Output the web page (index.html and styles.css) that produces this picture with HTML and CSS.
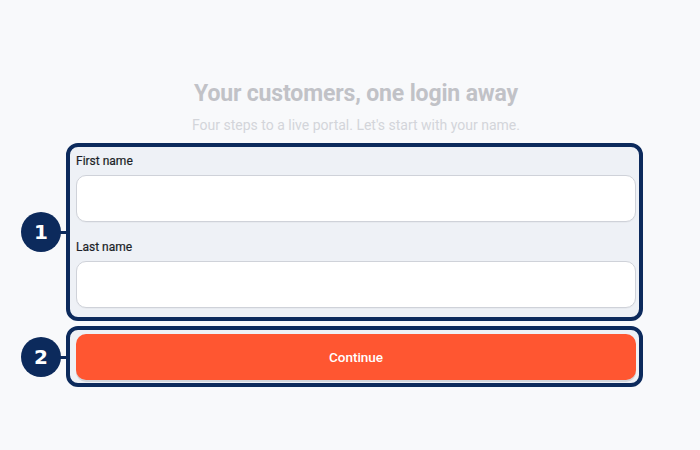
FILE: index.html
```html
<!DOCTYPE html>
<html lang="en">
<head>
    <meta charset="UTF-8">
    <meta name="viewport" content="width=device-width, initial-scale=1.0">
    <title>Onboarding - Your name</title>
    <link rel="stylesheet" href="styles.css">
</head>
<body>
    <div class="page">
        <h1 class="title">Your customers, one login away</h1>
        <p class="subtitle">Four steps to a live portal. Let's start with your name.</p>

        <div class="step step-fields">
            <span class="badge">1</span>
            <label class="label" for="first">First name</label>
            <input class="input first" id="first" type="text">
            <label class="label" for="last">Last name</label>
            <input class="input" id="last" type="text">
        </div>

        <div class="step step-action">
            <span class="badge">2</span>
            <button class="button">Continue</button>
        </div>
    </div>
</body>
</html>
```

FILE: styles.css
```css
body {
    margin: 0;
    background-color: #f8f9fb;
    font-family: Roboto, "Liberation Sans", sans-serif;
}

.page {
    width: 560px;
    margin-left: 76px;
    padding-top: 80px;
}

.title {
    margin: 0;
    font-size: 23px;
    line-height: 28px;
    font-weight: 700;
    color: #c1c2c7;
    text-align: center;
    letter-spacing: -0.15px;
}

.subtitle {
    margin: 8px 0 0;
    font-size: 14px;
    line-height: 18px;
    color: #d3d5da;
    text-align: center;
}

/* annotation frames */
.step {
    position: relative;
    display: flex;
    flex-direction: column;
    margin: 0 -7px 0 -10px;
    border: 4px solid #0c2a5c;
    border-radius: 12px;
    background-color: #eef1f6;
}

.step-fields {
    margin-top: 9px;
    padding: 6px 3px 9px 6px;
}

.step-action {
    margin-top: 5px;
    padding: 4px 3px 3px 6px;
}

.badge {
    position: absolute;
    left: -49px;
    top: 50%;
    width: 40px;
    height: 40px;
    margin-top: -20px;
    border-radius: 50%;
    background-color: #0c2a5c;
    color: #fff;
    font-family: "DejaVu Sans", sans-serif;
    font-weight: 700;
    font-size: 20px;
    line-height: 40px;
    text-align: center;
}

.badge::after {
    content: "";
    position: absolute;
    left: 39px;
    top: 19px;
    width: 7px;
    height: 3px;
    background-color: #0c2a5c;
}

.label {
    font-size: 12px;
    line-height: 16px;
    font-weight: 400;
    color: #1b1f27;
    -webkit-text-stroke: 0.2px #1b1f27;
}

.input {
    box-sizing: border-box;
    height: 47px;
    margin: 6px 0 0;
    padding: 0 12px;
    border: 1px solid #cfd2d9;
    border-radius: 10px;
    background-color: #fff;
    box-shadow: 0 1px 1px rgba(0, 0, 0, 0.03);
}

.input.first {
    margin-bottom: 17px;
}

.button {
    height: 46px;
    border: none;
    border-radius: 10px;
    background-color: #ff5631;
    color: #fff;
    font-family: Roboto, "Liberation Sans", sans-serif;
    font-size: 13.5px;
    font-weight: 500;
    box-shadow: 0 2px 0 #d3d6dc;
    cursor: pointer;
}
```
